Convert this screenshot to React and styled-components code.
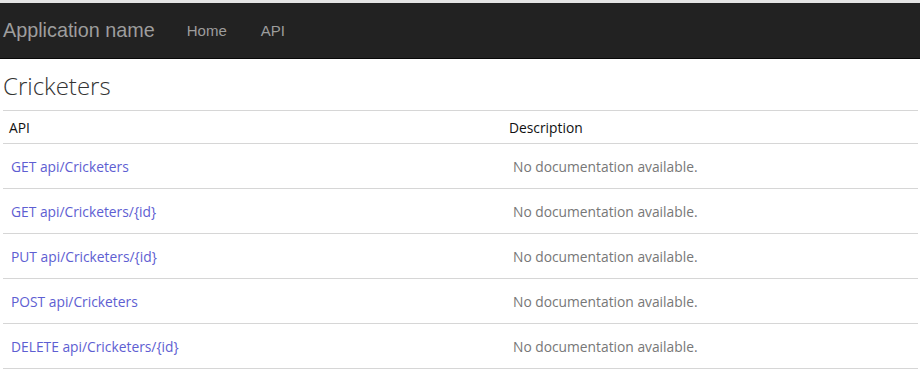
import React from 'react'
import styled, { createGlobalStyle } from 'styled-components'

const GlobalStyle = createGlobalStyle`
  body {
    margin: 0;
    background: #fff;
    font-family: "Open Sans", "Liberation Sans", sans-serif;
  }
`

const Page = styled.div`
  border-top: 3px solid #e4e4e4;
  width: 920px;
`

const NavBar = styled.div`
  height: 55px;
  background-color: #222;
  border-bottom: 1px solid #080808;
  display: flex;
  align-items: center;
  padding: 0 3px;
  font-family: "Liberation Sans", Arial, sans-serif;
`

const Brand = styled.a`
  color: #9d9d9d;
  font-size: 19.8px;
  margin-right: 32px;
  text-decoration: none;
`

const NavLink = styled.a`
  color: #9d9d9d;
  font-size: 15px;
  margin-right: 34px;
  text-decoration: none;
`

const Content = styled.div`
  padding: 0 2px 0 3px;
`

const Title = styled.h1`
  margin: 0;
  height: 49px;
  display: flex;
  align-items: center;
  font-size: 24px;
  font-weight: 300;
  color: #333;
  padding-top: 2px;
`

const Table = styled.table`
  width: 100%;
  border-collapse: collapse;
  font-size: 13.8px;
`

const Th = styled.th`
  text-align: left;
  font-weight: 400;
  color: #111;
  height: 32px;
  padding: 0 6px;
  border-top: 1px solid #d6d6d6;
  border-bottom: 1px solid #d6d6d6;
  width: ${({ $w }) => $w || 'auto'};
`

const Td = styled.td`
  height: 44px;
  padding: 0 8px 0 ${({ $muted }) => ($muted ? '10px' : '8px')};
  border-bottom: 1px solid #d6d6d6;
  color: ${({ $muted }) => ($muted ? '#777' : 'inherit')};
`

const ApiLink = styled.a`
  color: #5e5ed2;
  text-decoration: none;
`

const apis = [
  'GET api/Cricketers',
  'GET api/Cricketers/{id}',
  'PUT api/Cricketers/{id}',
  'POST api/Cricketers',
  'DELETE api/Cricketers/{id}',
]

export default function App() {
  return (
    <Page>
      <GlobalStyle />
      <NavBar>
        <Brand href="#">Application name</Brand>
        <NavLink href="#">Home</NavLink>
        <NavLink href="#">API</NavLink>
      </NavBar>
      <Content>
        <Title>Cricketers</Title>
        <Table>
          <thead>
            <tr>
              <Th $w="488px">API</Th>
              <Th>Description</Th>
            </tr>
          </thead>
          <tbody>
            {apis.map((a) => (
              <tr key={a}>
                <Td>
                  <ApiLink href="#">{a}</ApiLink>
                </Td>
                <Td $muted>No documentation available.</Td>
              </tr>
            ))}
          </tbody>
        </Table>
      </Content>
    </Page>
  )
}
